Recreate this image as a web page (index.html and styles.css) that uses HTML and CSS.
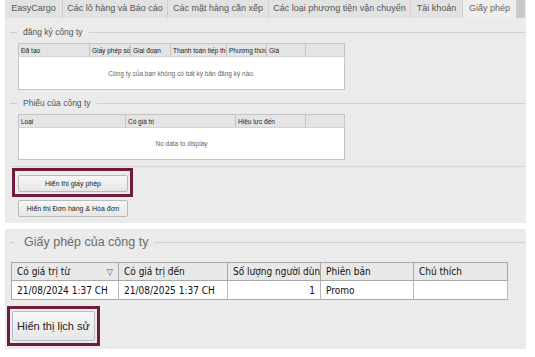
FILE: index.html
```html
<!DOCTYPE html>
<html lang="vi">
<head>
  <meta charset="UTF-8" />
  <title>Giấy phép - EasyCargo</title>
  <link rel="stylesheet" href="styles.css">
</head>
<body>
  <div class="page">

    <!-- Top panel with tabs -->
    <div class="panel panel-top">
      <div class="tabs">
        <div class="tab">EasyCargo</div>
        <div class="tab">Các lô hàng và Báo cáo</div>
        <div class="tab">Các mặt hàng cần xếp</div>
        <div class="tab">Các loại phương tiện vận chuyển</div>
        <div class="tab">Tài khoản</div>
        <div class="tab active">Giấy phép</div>
        <div class="tab-end"></div>
      </div>

      <div class="group-title">
        <span class="dash"></span>
        <span class="label">đăng ký công ty</span>
        <span class="rule"></span>
      </div>
      <table class="grid grid-small reg">
        <colgroup>
          <col class="c71"><col class="c41"><col class="c40"><col class="c56"><col class="c40"><col class="c39"><col class="c39">
        </colgroup>
        <thead>
          <tr>
            <th>Đã tạo</th>
            <th>Giấy phép số</th>
            <th>Giai đoạn</th>
            <th>Thanh toán tiếp theo</th>
            <th>Phương thức</th>
            <th>Giá</th>
            <th></th>
          </tr>
        </thead>
        <tbody>
          <tr><td colspan="7" class="empty">Công ty của bạn không có bất kỳ bản đăng ký nào.</td></tr>
        </tbody>
      </table>

      <div class="group-title second">
        <span class="dash"></span>
        <span class="label">Phiếu của công ty</span>
        <span class="rule"></span>
      </div>
      <table class="grid grid-small vouchers">
        <colgroup>
          <col class="c107"><col class="c110"><col class="c70"><col class="c39">
        </colgroup>
        <thead>
          <tr>
            <th>Loại</th>
            <th>Có giá trị</th>
            <th>Hiệu lực đến</th>
            <th></th>
          </tr>
        </thead>
        <tbody>
          <tr><td colspan="4" class="empty">No data to display</td></tr>
        </tbody>
      </table>

      <div class="separator"></div>

      <div class="highlight small-hl">
        <button class="btn btn-small">Hiển thị giấy phép</button>
      </div>
      <button class="btn btn-small orders">Hiển thị Đơn hàng &amp; Hóa đơn</button>
    </div>

    <!-- Bottom panel -->
    <div class="panel panel-bottom">
      <div class="group-title big">
        <span class="dash"></span>
        <span class="label">Giấy phép của công ty</span>
        <span class="rule"></span>
      </div>
      <table class="grid grid-large">
        <colgroup>
          <col class="c107"><col class="c109"><col class="c93"><col class="c93"><col class="c94">
        </colgroup>
        <thead>
          <tr>
            <th><div class="sort">Có giá trị từ <span class="arrow">&#9661;</span></div></th>
            <th>Có giá trị đến</th>
            <th>Số lượng người dùng</th>
            <th>Phiên bản</th>
            <th>Chú thích</th>
          </tr>
        </thead>
        <tbody>
          <tr>
            <td>21/08/2024 1:37 CH</td>
            <td>21/08/2025 1:37 CH</td>
            <td class="num">1</td>
            <td>Promo</td>
            <td></td>
          </tr>
        </tbody>
      </table>

      <div class="highlight large-hl">
        <button class="btn btn-large">Hiển thị lịch sử</button>
      </div>
    </div>

  </div>
</body>
</html>
```

FILE: styles.css
```css
body {
  margin: 0;
  background: #fff;
  font-family: 'Liberation Sans', Arial, sans-serif;
  color: #222;
}

.page {
  padding: 0 9px 0 5px;
}

.panel {
  background: #ebebeb;
}

.panel-top {
  height: 223px;
  overflow: hidden;
}

.panel-bottom {
  margin-top: 6px;
  padding-top: 5px;
  height: 115px;
}

/* tabs */
.tabs {
  display: grid;
  grid-template-columns: 58px 105px 101px 142px 52px 54px 8px 1fr;
  height: 18px;
}

.tab {
  background: #e2e2e2;
  border-right: 1px solid #cfcfcf;
  font-size: 9px;
  color: #555;
  text-align: center;
  line-height: 17px;
  white-space: nowrap;
}

.tab.active {
  background: #efefef;
  color: #666;
}

.tab-end {
  background: #c9c9c9;
}

/* group titles */
.group-title {
  display: flex;
  align-items: center;
  height: 12px;
  margin-top: 8px;
  color: #555;
  font-size: 8.5px;
}

.group-title .dash {
  width: 7px;
  height: 1px;
  background: #cfcfcf;
  margin-left: 5px;
}

.group-title .label {
  padding: 0 6px;
  white-space: nowrap;
}

.group-title .rule {
  flex: 1;
  height: 1px;
  background: #cfcfcf;
  margin-right: 1px;
}

.group-title.second {
  margin-top: 7px;
}

.group-title.big {
  height: 16px;
  margin-top: 0;
  font-size: 12.5px;
  color: #6a6a6a;
}

.group-title.big .dash {
  margin-left: 5px;
  width: 5px;
}

.group-title.big .label {
  padding: 0 6px 0 9px;
}

/* grids */
.grid {
  border-collapse: collapse;
  table-layout: fixed;
  background: #fff;
}

.grid th, .grid td {
  overflow: hidden;
  white-space: nowrap;
  text-overflow: clip;
  text-align: left;
  font-weight: normal;
}

.grid-small {
  margin: 5px 0 0 13px;
  width: 326px;
  border: 1px solid #c4c4c4;
  font-size: 6.5px;
}

.grid-small th {
  background: #e4e4e4;
  height: 12px;
  padding: 0 2px;
  border-right: 1px solid #c4c4c4;
  border-bottom: 1px solid #d4d4d4;
  color: #222;
}

.grid-small .empty {
  text-align: center;
  color: #666;
  font-size: 6.5px;
}

.reg .empty {
  height: 30px;
}

.vouchers .empty {
  height: 29px;
}

.c71 { width: 71px; }
.c41 { width: 41px; }
.c40 { width: 40px; }
.c56 { width: 56px; }
.c39 { width: 39px; }
.c107 { width: 107px; }
.c110 { width: 110px; }
.c70 { width: 70px; }
.c109 { width: 109px; }
.c93 { width: 93px; }
.c94 { width: 94px; }

.grid-large {
  margin: 12px 0 0 6px;
  width: 496px;
  border: 1px solid #a8a8a8;
  font-family: 'DejaVu Sans Condensed', 'DejaVu Sans', sans-serif;
  font-size: 10px;
}

.grid-large th {
  background: #e8e8e8;
  height: 17px;
  padding: 0 5px;
  border-right: 1px solid #a8a8a8;
  border-bottom: 1px solid #a8a8a8;
  color: #111;
}

.grid-large td {
  height: 18px;
  padding: 0 5px;
  border-right: 1px solid #b8b8b8;
  color: #111;
}

.grid-large td.num {
  text-align: right;
}

.sort {
  display: flex;
  justify-content: space-between;
  align-items: center;
}

.sort .arrow {
  font-size: 9px;
  color: #555;
}

/* separators and buttons */
.separator {
  margin: 6px 1px 0 7px;
  height: 1px;
  background: #d6d6d6;
}

.highlight {
  display: inline-block;
  border: 3px solid #6e1c3f;
}

.small-hl {
  margin: 1px 0 0 7px;
  padding: 4px 2px 2px 3px;
}

.large-hl {
  margin: 6px 0 0 2px;
  padding: 2px;
}

.btn {
  display: block;
  font-family: 'Liberation Sans', Arial, sans-serif;
  background: linear-gradient(#f7f7f7, #e6e6e6);
  border: 1px solid #b9b9b9;
  border-radius: 2px;
  color: #222;
  padding: 0;
  cursor: pointer;
}

.btn-small {
  width: 110px;
  height: 17px;
  font-size: 7px;
}

.orders {
  margin: 3px 0 0 13px;
}

.btn-large {
  width: 83px;
  height: 30px;
  font-size: 11px;
  border-color: #b7bfcc;
}
```
